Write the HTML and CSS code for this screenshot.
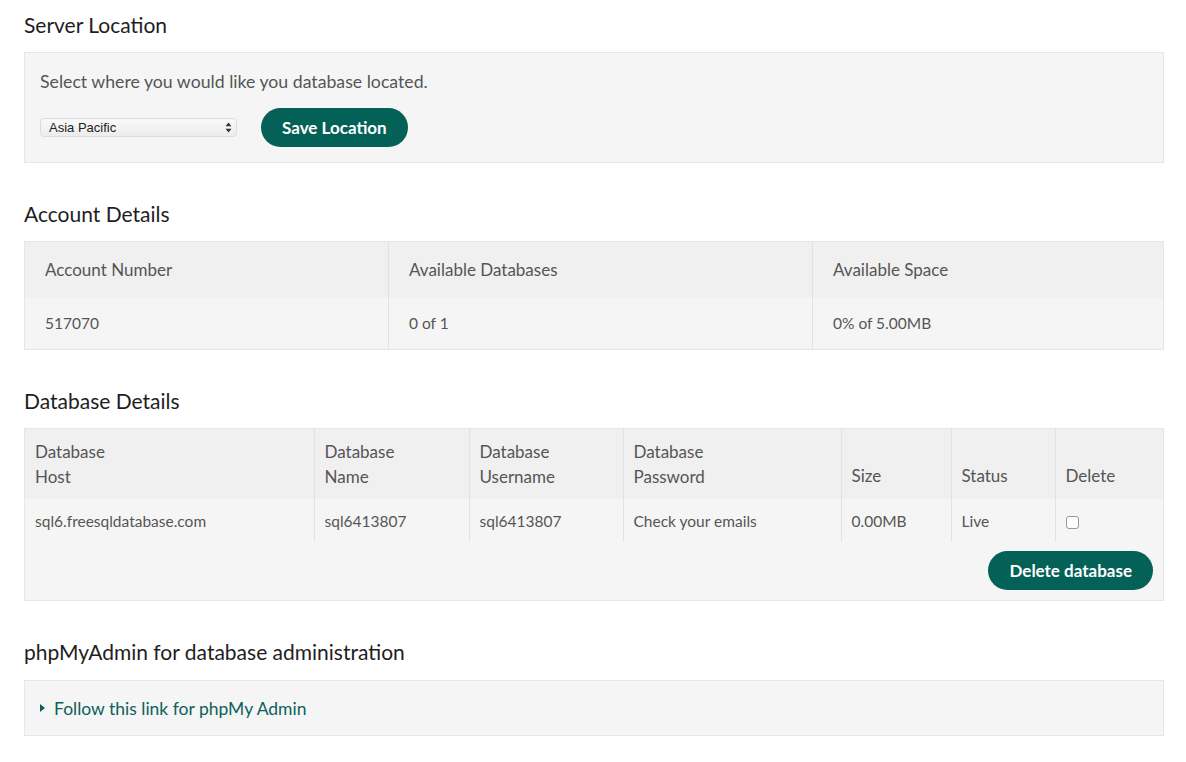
FILE: index.html
```html
<!DOCTYPE html>
<html>
<head>
<meta charset="utf-8">
<link rel="stylesheet" href="styles.css">
</head>
<body>
<div class="page">
  <h2 class="title t1">Server Location</h2>
  <div class="panel location">
    <p class="lead">Select where you would like you database located.</p>
    <div class="loc-row">
      <div class="select"><span>Asia Pacific</span>
        <svg class="arrows" width="7" height="11" viewBox="0 0 7 11"><path d="M3.5 0.5 L6.5 4.3 H0.5 Z M3.5 10.5 L6.5 6.7 H0.5 Z" fill="#333"/></svg>
      </div>
      <button class="btn">Save Location</button>
    </div>
  </div>

  <h2 class="title t2">Account Details</h2>
  <table class="tbl acct">
    <colgroup><col class="c1"><col class="c2"><col class="c3"></colgroup>
    <thead><tr><th>Account Number</th><th>Available Databases</th><th>Available Space</th></tr></thead>
    <tbody><tr><td>517070</td><td>0 of 1</td><td>0% of 5.00MB</td></tr></tbody>
  </table>

  <h2 class="title t3">Database Details</h2>
  <div class="dbwrap">
    <table class="tbl db">
      <colgroup><col class="d1"><col class="d2"><col class="d3"><col class="d4"><col class="d5"><col class="d6"><col></colgroup>
      <thead><tr><th>Database<br>Host</th><th>Database<br>Name</th><th>Database<br>Username</th><th>Database<br>Password</th><th>Size</th><th>Status</th><th>Delete</th></tr></thead>
      <tbody><tr><td>sql6.freesqldatabase.com</td><td>sql6413807</td><td>sql6413807</td><td>Check your emails</td><td>0.00MB</td><td>Live</td><td><span class="check"></span></td></tr></tbody>
    </table>
    <div class="btn-row"><button class="btn">Delete database</button></div>
  </div>

  <h2 class="title t4">phpMyAdmin for database administration</h2>
  <div class="panel pma">
    <a class="link" href="#"><svg width="5" height="8" viewBox="0 0 5 8"><path d="M0 0 L5 4 L0 8 Z" fill="#0b6159"/></svg>Follow this link for phpMy Admin</a>
  </div>
</div>
</body>
</html>
```
FILE: styles.css
```css
* { box-sizing: border-box; }
html, body { margin: 0; padding: 0; background: #fff; }
body { font-family: "Lato", "Open Sans", sans-serif; color: #222; }
.page { padding: 0 22px 0 24px; width: 1186px; }
.title { font-weight: 400; font-size: 21px; margin: 0; color: #1e1e1e; line-height: 26px; }
.t1 { padding-top: 12px; height: 52px; }
.t2 { height: 78px; padding-top: 38px; }
.t3 { height: 78px; padding-top: 38px; }
.t4 { height: 79px; padding-top: 38px; }
.panel { background: #f5f5f5; border: 1px solid #e6e6e6; }
.location { height: 111px; padding: 17px 15px 0 15px; }
.lead { margin: 0; font-size: 17.7px; color: #555; line-height: 24px; }
.loc-row { display: flex; align-items: center; margin-top: 14px; gap: 24px; }
.select { width: 197px; height: 19px; border-radius: 4px; background: linear-gradient(#fafafa, #ececec); border: 1px solid #dcdcdc; display: flex; align-items: center; justify-content: space-between; padding: 0 4px 0 8px; font-family: "Liberation Sans", Arial, sans-serif; font-size: 13px; color: #222; }
.btn { background: #046158; color: #fff; border: 0; border-radius: 20px; height: 39px; padding: 0 21px; font-family: "Lato", sans-serif; font-size: 17px; font-weight: 700; cursor: pointer; }
.tbl { width: 1140px; border-collapse: collapse; border: 1px solid #e6e6e6; table-layout: fixed; }
.acct .c1 { width: 364px; } .acct .c2 { width: 424px; }
.db .d1 { width: 289px; } .db .d2 { width: 155px; } .db .d3 { width: 154px; }
.db .d4 { width: 218px; } .db .d5 { width: 110px; } .db .d6 { width: 104px; }
.tbl th { background: #f0f0f0; font-weight: 400; text-align: left; color: #555; font-size: 17px; }
.tbl td { background: #f5f5f5; color: #555; font-size: 15.5px; }
.tbl th + th, .tbl td + td { border-left: 1px solid #e2e2e2; }
.acct th { height: 56px; padding: 0 20px; }
.acct td { height: 52px; padding: 0 20px; }
.dbwrap { background: #f5f5f5; border: 1px solid #e6e6e6; width: 1140px; }
.db { border: 0; width: 1138px; }
.db th { height: 70px; padding: 10px 10px 0; line-height: 25px; vertical-align: top; }
.db th:nth-child(n+5) { vertical-align: bottom; padding: 0 10px 11px; }
.db td { height: 43px; padding: 0 10px; }
.check { display: inline-block; width: 13px; height: 13px; border: 1px solid #999; border-radius: 3px; background: #fff; vertical-align: middle; }
.btn-row { display: flex; justify-content: flex-end; padding: 9px 10px 10px; }
.pma { height: 56px; padding: 0 15px; display: flex; align-items: center; }
.link { color: #0b6159; text-decoration: none; font-size: 17.5px; display: flex; align-items: center; gap: 9px; }
```
